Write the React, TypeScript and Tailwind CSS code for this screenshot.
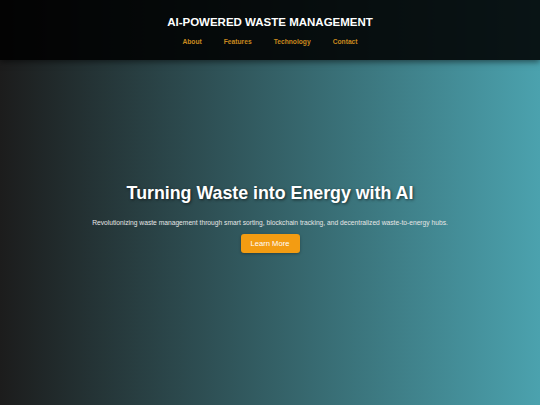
export default function App() {
  return (
    <div
      className="w-[540px] h-[405px] flex flex-col overflow-hidden bg-[linear-gradient(to_right,#1c1c1c,#4ba2ae)]"
      style={{ fontFamily: '"Liberation Sans", Arial, sans-serif' }}
    >
      <header className="h-[60px] shrink-0 bg-[rgba(0,0,0,0.88)] shadow-[0_2px_6px_rgba(0,0,0,0.5)] flex flex-col items-center pt-[15px]">
        <h1 className="text-white font-bold text-[11.5px] leading-[14px]">AI-POWERED WASTE MANAGEMENT</h1>
        <nav className="flex gap-[22px] mt-[9px]">
          <a className="text-[#c9891e] font-bold text-[6.7px] leading-[8px]">About</a>
          <a className="text-[#c9891e] font-bold text-[6.7px] leading-[8px]">Features</a>
          <a className="text-[#c9891e] font-bold text-[6.7px] leading-[8px]">Technology</a>
          <a className="text-[#c9891e] font-bold text-[6.7px] leading-[8px]">Contact</a>
        </nav>
      </header>
      <main className="flex-1 flex flex-col items-center pt-[123px]">
        <h2 className="text-white font-bold text-[17.8px] leading-[21px] [text-shadow:1px_1px_3px_rgba(0,0,0,0.6)]">
          Turning Waste into Energy with AI
        </h2>
        <p className="text-[#e6e6e6] text-[6.7px] leading-[9px] mt-[14px]">
          Revolutionizing waste management through smart sorting, blockchain tracking, and decentralized waste-to-energy hubs.
        </p>
        <button className="mt-[7px] w-[59px] h-[19px] rounded-[3px] bg-[#f39c12] text-white font-normal text-[7.6px] leading-[10px] shadow-[0_1px_3px_rgba(0,0,0,0.3)]">
          Learn More
        </button>
      </main>
    </div>
  );
}
